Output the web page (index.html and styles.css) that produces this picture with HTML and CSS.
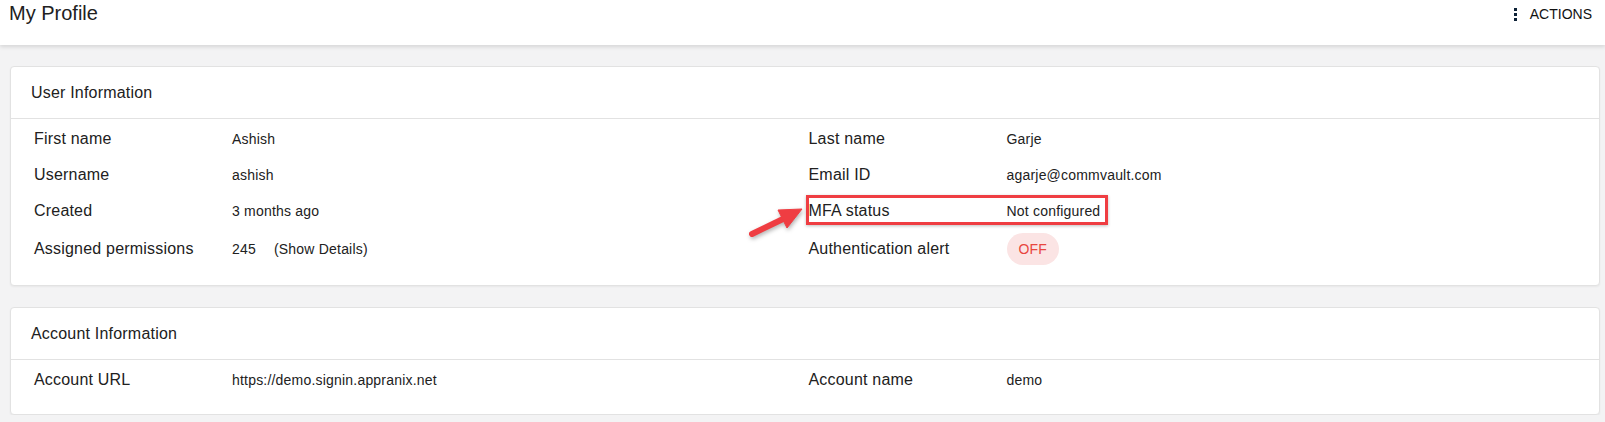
FILE: index.html
```html
<!DOCTYPE html>
<html lang="en">
<head>
  <meta charset="UTF-8" />
  <meta name="viewport" content="width=device-width, initial-scale=1.0"/>
  <title>My Profile</title>
  <link rel="stylesheet" href="styles.css">
</head>
<body>
  <header class="page-header">
    <h1>My Profile</h1>
    <button class="actions">
      <span class="dots"><i></i><i></i><i></i></span>
      ACTIONS
    </button>
  </header>

  <main class="content">
    <section class="card">
      <div class="card-title">User Information</div>
      <div class="card-body">
        <div class="field">
          <span class="label">First name</span>
          <span class="value">Ashish</span>
        </div>
        <div class="field">
          <span class="label">Last name</span>
          <span class="value">Garje</span>
        </div>
        <div class="field">
          <span class="label">Username</span>
          <span class="value">ashish</span>
        </div>
        <div class="field">
          <span class="label">Email ID</span>
          <span class="value">agarje@commvault.com</span>
        </div>
        <div class="field">
          <span class="label">Created</span>
          <span class="value">3 months ago</span>
        </div>
        <div class="field marked">
          <span class="label">MFA status</span>
          <span class="value">Not configured</span>
          <!-- annotation -->
          <span class="highlight"></span>
          <svg class="arrow" width="64" height="44" viewBox="0 0 64 44">
            <g fill="#ef3d42" stroke="#ef3d42">
              <line x1="8" y1="33" x2="39" y2="18" stroke-width="6" stroke-linecap="round"/>
              <polygon points="58,8 43,27 34,9" stroke-width="1" stroke-linejoin="round"/>
            </g>
          </svg>
        </div>
        <div class="field">
          <span class="label">Assigned permissions</span>
          <span class="value">245 <a class="details">(Show Details)</a></span>
        </div>
        <div class="field">
          <span class="label">Authentication alert</span>
          <span class="value"><span class="pill">OFF</span></span>
        </div>
      </div>
    </section>

    <section class="card">
      <div class="card-title">Account Information</div>
      <div class="card-body">
        <div class="field">
          <span class="label">Account URL</span>
          <span class="value">https://demo.signin.appranix.net</span>
        </div>
        <div class="field">
          <span class="label">Account name</span>
          <span class="value">demo</span>
        </div>
      </div>
    </section>
  </main>
</body>
</html>
```

FILE: styles.css
```css
:root {
  --bg: #f3f3f4;
  --white: #ffffff;
  --text: #212121;
  --border: #e2e2e2;
  --red: #ef3d42;
  --pill-bg: #fbe4e4;
}

* {
  box-sizing: border-box;
  margin: 0;
  padding: 0;
}

body {
  font-family: "Liberation Sans", Arial, sans-serif;
  background-color: var(--bg);
  color: var(--text);
  overflow: hidden;
}

.page-header {
  height: 45px;
  background-color: var(--white);
  display: flex;
  justify-content: space-between;
  align-items: flex-start;
  padding: 0 13px 0 9px;
  box-shadow: 0 2px 4px rgba(0, 0, 0, 0.12);
  position: relative;
  z-index: 1;
}

.page-header h1 {
  font-size: 20px;
  font-weight: 400;
  line-height: 23px;
  margin-top: 2px;
}

.actions {
  display: flex;
  align-items: center;
  gap: 13px;
  margin-top: 6px;
  background: none;
  border: none;
  font-family: inherit;
  font-size: 14px;
  color: #111;
  line-height: 16px;
}

.dots {
  display: flex;
  flex-direction: column;
  gap: 2px;
}

.dots i {
  width: 3px;
  height: 3px;
  background-color: #0d2237;
}

.content {
  padding: 21px 5px 0 10px;
  display: flex;
  flex-direction: column;
  gap: 21px;
}

.card {
  background-color: var(--white);
  border: 1px solid var(--border);
  border-radius: 4px;
  box-shadow: 0 1px 2px rgba(0, 0, 0, 0.05);
}

.card-title {
  height: 52px;
  padding-left: 20px;
  display: flex;
  align-items: center;
  font-size: 16px;
  letter-spacing: 0.2px;
  border-bottom: 1px solid var(--border);
}

.card-body {
  display: grid;
  grid-template-columns: 1fr 1fr;
  padding: 2px 16px 16px 23px;
}

.field {
  display: flex;
  align-items: center;
  min-height: 36px;
  position: relative;
}

.label {
  width: 198px;
  flex-shrink: 0;
  font-size: 16px;
  letter-spacing: 0.2px;
}

.value {
  font-size: 14px;
  letter-spacing: 0.2px;
  display: flex;
  align-items: center;
}

.details {
  margin-left: 18px;
}

.pill {
  display: inline-block;
  margin: 4px 0;
  height: 32px;
  line-height: 32px;
  padding: 0 12px;
  border-radius: 16px;
  background-color: var(--pill-bg);
  color: #e8463f;
}

.highlight {
  position: absolute;
  left: -3px;
  top: 2px;
  width: 302px;
  height: 30px;
  border: 3px solid var(--red);
  box-shadow: 0 1px 3px rgba(0, 0, 0, 0.25);
}

.arrow {
  position: absolute;
  left: -65px;
  top: 8px;
  filter: drop-shadow(1px 2px 2px rgba(0, 0, 0, 0.3));
}
```
